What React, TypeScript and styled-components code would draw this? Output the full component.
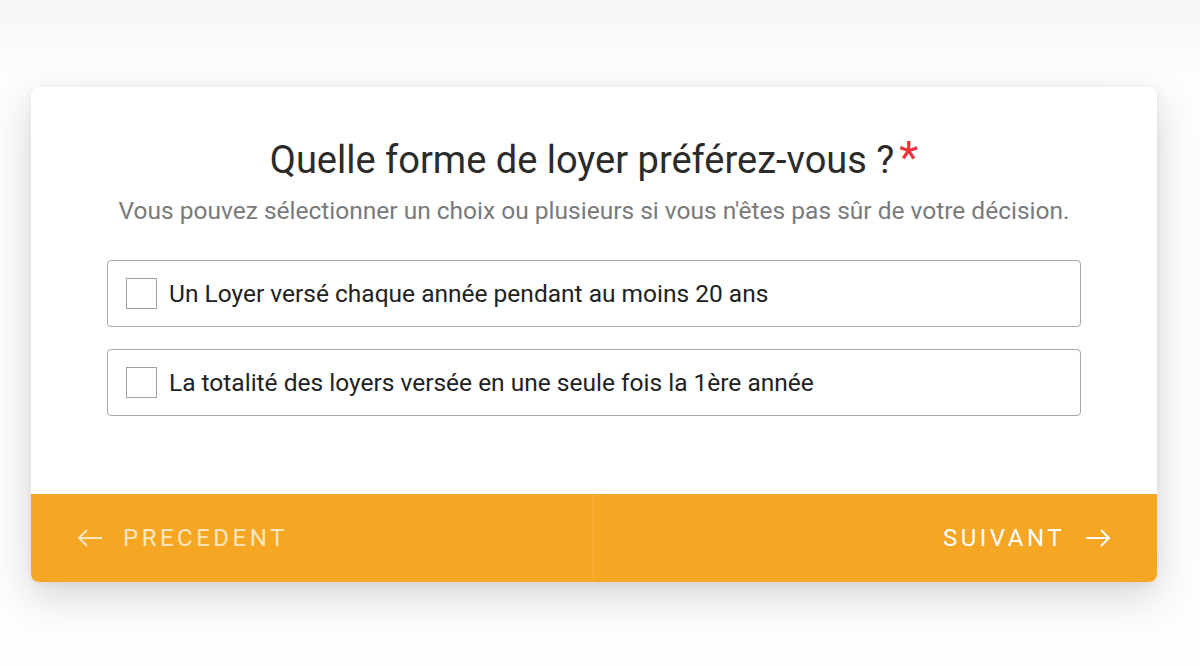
import React, { useState } from "react";
import styled, { createGlobalStyle } from "styled-components";

const GlobalStyle = createGlobalStyle`
  html, body {
    margin: 0;
    padding: 0;
    background: #fbfbfb;
    font-family: Roboto, "Liberation Sans", sans-serif;
  }
`;

const options = [
  "Un Loyer versé chaque année pendant au moins 20 ans",
  "La totalité des loyers versée en une seule fois la 1ère année",
];

export default function App() {
  const [checked, setChecked] = useState<boolean[]>(options.map(() => false));

  const toggle = (i: number) =>
    setChecked((prev) => prev.map((v, j) => (j === i ? !v : v)));

  return (
    <Page>
      <GlobalStyle />
      <Card>
        <Body>
          <Title>
            Quelle forme de loyer préférez-vous ?<Required>*</Required>
          </Title>
          <Subtitle>
            Vous pouvez sélectionner un choix ou plusieurs si vous n'êtes pas sûr de votre décision.
          </Subtitle>
          <OptionList>
            {options.map((label, i) => (
              <Option key={label} onClick={() => toggle(i)}>
                <Box $checked={checked[i]} />
                <OptionText>{label}</OptionText>
              </Option>
            ))}
          </OptionList>
        </Body>
        <Footer>
          <NavButton $side="left">
            <Arrow viewBox="0 0 26 20" $dim>
              <path d="M25 10H2M10 2L2 10l8 8" />
            </Arrow>
            <NavLabel $dim>PRECEDENT</NavLabel>
          </NavButton>
          <NavButton $side="right">
            <NavLabel>SUIVANT</NavLabel>
            <Arrow viewBox="0 0 26 20">
              <path d="M1 10h23M16 2l8 8-8 8" />
            </Arrow>
          </NavButton>
        </Footer>
      </Card>
    </Page>
  );
}

const Page = styled.div`
  min-height: 666px;
  padding: 87px 43px 0 31px;
  box-sizing: border-box;
  background: linear-gradient(#f6f6f6, #fdfdfd 80px);
`;

const Card = styled.div`
  background: #fff;
  border-radius: 8px;
  overflow: hidden;
  box-shadow: 0 14px 40px rgba(0, 0, 0, 0.16), 0 2px 8px rgba(0, 0, 0, 0.05);
`;

const Body = styled.div`
  display: flex;
  flex-direction: column;
  align-items: center;
  padding: 47px 76px 78px;
`;

const Title = styled.h1`
  margin: 0;
  height: 52px;
  font-size: 38px;
  font-weight: 400;
  color: #2b2b2b;
  line-height: 52px;
  white-space: nowrap;
`;

const Required = styled.span`
  color: #e8343a;
  margin-left: 5px;
  font-size: 44px;
  line-height: 1;
`;

const Subtitle = styled.p`
  margin: 8px 0 0;
  font-size: 24.5px;
  color: #7a7a7a;
  line-height: 34px;
  white-space: nowrap;
`;

const OptionList = styled.div`
  align-self: stretch;
  display: flex;
  flex-direction: column;
  gap: 22px;
  margin-top: 32px;
`;

const Option = styled.label`
  display: flex;
  align-items: center;
  gap: 12px;
  height: 67px;
  box-sizing: border-box;
  padding: 0 18px;
  border: 1px solid #a8a8a8;
  border-radius: 4px;
  cursor: pointer;
`;

const Box = styled.span<{ $checked: boolean }>`
  width: 31px;
  height: 31px;
  flex-shrink: 0;
  box-sizing: border-box;
  border: 1.5px solid #a0a0a0;
  background: ${(p) => (p.$checked ? "#f5a623" : "#fff")};
`;

const OptionText = styled.span`
  font-size: 24.5px;
  color: #222;
`;

const Footer = styled.div`
  display: grid;
  grid-template-columns: 1fr 1fr;
  height: 88px;
  background: #f5a623;
`;

const NavButton = styled.div<{ $side: "left" | "right" }>`
  display: flex;
  align-items: center;
  gap: 20px;
  justify-content: ${(p) => (p.$side === "left" ? "flex-start" : "flex-end")};
  padding: ${(p) => (p.$side === "left" ? "0 0 0 46px" : "0 46px 0 0")};
  border-right: ${(p) => (p.$side === "left" ? "1px solid #f7b340" : "none")};
  cursor: pointer;
`;

const NavLabel = styled.span<{ $dim?: boolean }>`
  font-size: 24px;
  letter-spacing: 3.5px;
  color: ${(p) => (p.$dim ? "#fde6c0" : "#fff")};
`;

const Arrow = styled.svg<{ $dim?: boolean }>`
  width: 26px;
  height: 20px;
  flex-shrink: 0;
  fill: none;
  stroke: ${(p) => (p.$dim ? "#fde6c0" : "#fff")};
  stroke-width: 2;
`;
